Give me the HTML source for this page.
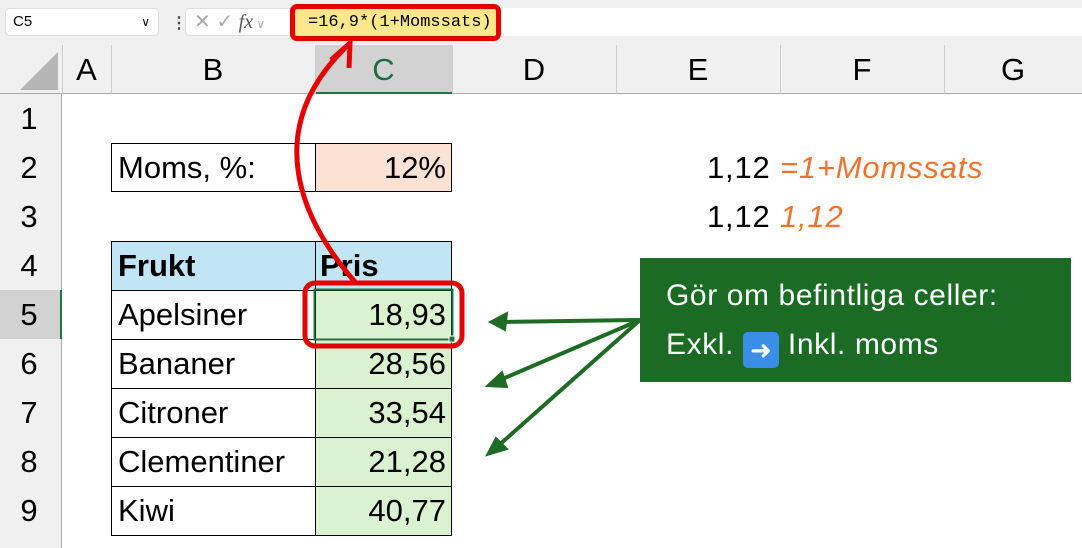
<!DOCTYPE html>
<html><head><meta charset="utf-8"><style>
*{margin:0;padding:0;box-sizing:border-box}
body{width:1082px;height:548px;overflow:hidden;background:#fff;font-family:"Liberation Sans",sans-serif;position:relative}
.a{position:absolute}
.t{position:absolute;font-size:31px;color:#000;line-height:49px;white-space:nowrap}
</style></head><body>
<div class="a" style="left:0;top:0;width:1082px;height:45px;background:#f0f0f0"></div>
<div class="a" style="left:5px;top:8px;width:154px;height:28px;background:#fff;border:1px solid #ddd;border-radius:5px;font-size:15px;line-height:26px;padding-left:7px">C5<span style="position:absolute;right:8px;top:0;font-size:12px">&#8744;</span></div>
<div class="a" style="left:171px;top:13px;font-size:16px;color:#444;font-weight:bold">&#8942;</div>
<div class="a" style="left:185px;top:8px;width:112px;height:28px;background:#fff;border:1px solid #ddd;border-radius:5px;color:#aaa;font-size:20px;line-height:26px;padding-left:8px">&#10005; &#10003; <i style="font-family:'Liberation Serif';color:#555">fx</i><span style="font-size:12px"> &#8744;</span></div>
<div class="a" style="left:297px;top:8px;width:785px;height:28px;background:#fff"></div>
<div class="a" style="left:290px;top:4px;width:211px;height:37px;border:5px solid #e50000;border-radius:7px;background:#fbe88a;font-family:'Liberation Mono',monospace;font-size:17px;line-height:27px;padding-left:13px">=16,9*(1+Momssats)</div>
<div class="a" style="left:0;top:45px;width:1082px;height:49px;background:#f0f0f0;border-bottom:1px solid #aaa"></div>
<div class="a" style="left:0;top:94px;width:62px;height:454px;background:#f0f0f0;border-right:1px solid #aaa"></div>
<svg class="a" style="left:18px;top:50px" width="42" height="42"><polygon points="40,2 40,40 2,40" fill="#b5b5b5"/></svg>
<div class="a" style="left:315px;top:45px;width:137px;height:49px;background:#d2d2d2;border-bottom:2px solid #217346"></div>
<div class="a" style="left:0;top:290px;width:62px;height:49px;background:#d2d2d2;border-right:2px solid #217346"></div>
<div class="a" style="left:62px;top:45px;width:1px;height:49px;background:#ccc"></div>
<div class="a" style="left:111px;top:45px;width:1px;height:49px;background:#ccc"></div>
<div class="a" style="left:315px;top:45px;width:1px;height:49px;background:#ccc"></div>
<div class="a" style="left:452px;top:45px;width:1px;height:49px;background:#ccc"></div>
<div class="a" style="left:616px;top:45px;width:1px;height:49px;background:#ccc"></div>
<div class="a" style="left:780px;top:45px;width:1px;height:49px;background:#ccc"></div>
<div class="a" style="left:944px;top:45px;width:1px;height:49px;background:#ccc"></div>
<div class="t" style="left:62px;top:45px;width:49px;text-align:center">A</div>
<div class="t" style="left:111px;top:45px;width:204px;text-align:center">B</div>
<div class="t" style="left:315px;top:45px;width:137px;text-align:center;color:#1e6b45">C</div>
<div class="t" style="left:452px;top:45px;width:164px;text-align:center">D</div>
<div class="t" style="left:616px;top:45px;width:164px;text-align:center">E</div>
<div class="t" style="left:780px;top:45px;width:164px;text-align:center">F</div>
<div class="t" style="left:944px;top:45px;width:138px;text-align:center">G</div>
<div class="t" style="left:0;top:94px;width:58px;text-align:center">1</div>
<div class="t" style="left:0;top:143px;width:58px;text-align:center">2</div>
<div class="t" style="left:0;top:192px;width:58px;text-align:center">3</div>
<div class="t" style="left:0;top:241px;width:58px;text-align:center">4</div>
<div class="t" style="left:0;top:290px;width:58px;text-align:center">5</div>
<div class="t" style="left:0;top:339px;width:58px;text-align:center">6</div>
<div class="t" style="left:0;top:388px;width:58px;text-align:center">7</div>
<div class="t" style="left:0;top:437px;width:58px;text-align:center">8</div>
<div class="t" style="left:0;top:486px;width:58px;text-align:center">9</div>
<div class="a" style="left:111px;top:143px;width:341px;height:49px;border:1px solid #000"></div>
<div class="a" style="left:315px;top:143px;width:137px;height:49px;background:#fbe2d5;border:1px solid #000"></div>
<div class="t" style="left:118px;top:143px">Moms, %:</div>
<div class="t" style="left:315px;top:143px;width:131px;text-align:right">12%</div>
<div class="a" style="left:111px;top:241px;width:341px;height:49px;background:#c1e5f5"></div>
<div class="a" style="left:315px;top:290px;width:137px;height:245px;background:#dbf2d0"></div>
<svg class="a" style="left:0;top:0" width="1082" height="548">
<g stroke="#000" stroke-width="1" fill="none">
<rect x="111.5" y="241.5" width="340" height="294"/>
<line x1="315.5" y1="241" x2="315.5" y2="536"/>
<line x1="111" y1="290.5" x2="452" y2="290.5"/><line x1="111" y1="339.5" x2="452" y2="339.5"/>
<line x1="111" y1="388.5" x2="452" y2="388.5"/><line x1="111" y1="437.5" x2="452" y2="437.5"/>
<line x1="111" y1="486.5" x2="452" y2="486.5"/>
</g>
<rect x="314.5" y="289.5" width="138" height="50" fill="none" stroke="#217346" stroke-width="2"/>
<rect x="449" y="336" width="6" height="6" fill="#217346" stroke="#fff"/>
</svg>
<div class="t" style="left:118px;top:241px;font-weight:bold">Frukt</div>
<div class="t" style="left:320px;top:241px;font-weight:bold">Pris</div>
<div class="t" style="left:118px;top:290px">Apelsiner</div>
<div class="t" style="left:118px;top:339px">Bananer</div>
<div class="t" style="left:118px;top:388px">Citroner</div>
<div class="t" style="left:118px;top:437px">Clementiner</div>
<div class="t" style="left:118px;top:486px">Kiwi</div>
<div class="t" style="left:315px;top:290px;width:131px;text-align:right">18,93</div>
<div class="t" style="left:315px;top:339px;width:131px;text-align:right">28,56</div>
<div class="t" style="left:315px;top:388px;width:131px;text-align:right">33,54</div>
<div class="t" style="left:315px;top:437px;width:131px;text-align:right">21,28</div>
<div class="t" style="left:315px;top:486px;width:131px;text-align:right">40,77</div>
<div class="t" style="left:707px;top:143px;letter-spacing:0.8px">1,12 <i style="color:#ee7330">=1+Momssats</i></div>
<div class="t" style="left:707px;top:192px;letter-spacing:0.8px">1,12 <i style="color:#ee7330">1,12</i></div>
<div class="a" style="left:640px;top:258px;width:431px;height:124px;background:#1b6b24;color:#fff;font-size:30px;line-height:49px;padding:13px 0 0 26px;letter-spacing:0.6px;white-space:nowrap">Gör om befintliga celler:<br>Exkl. <span style="display:inline-block;width:36px;height:36px;background:#3b8ee8;border-radius:5px;vertical-align:-5px;color:#fff;text-align:center;line-height:36px;font-size:26px;letter-spacing:0">&#10140;</span> Inkl. moms</div>
<svg class="a" style="left:0;top:0" width="1082" height="548">
<rect x="305" y="283" width="157" height="63" rx="10" fill="none" stroke="#e50000" stroke-width="5"/>
<path d="M356,283 C300,220 262,130 345,48" fill="none" stroke="#e50000" stroke-width="5"/>
<path d="M331,60 L350,43 L349,68" fill="none" stroke="#e50000" stroke-width="5"/>
<g stroke="#1e6b24" stroke-width="4" fill="#1e6b24">
<line x1="640" y1="320" x2="500" y2="322"/>
<line x1="640" y1="320" x2="500" y2="380"/>
<line x1="640" y1="320" x2="498" y2="446"/>
<polygon points="490,322 507,313 505,330" stroke-width="2"/>
<polygon points="487,386 502,372 507,387" stroke-width="2"/>
<polygon points="487,455 496,438 507,449" stroke-width="2"/>
</g>
</svg>
</body></html>
